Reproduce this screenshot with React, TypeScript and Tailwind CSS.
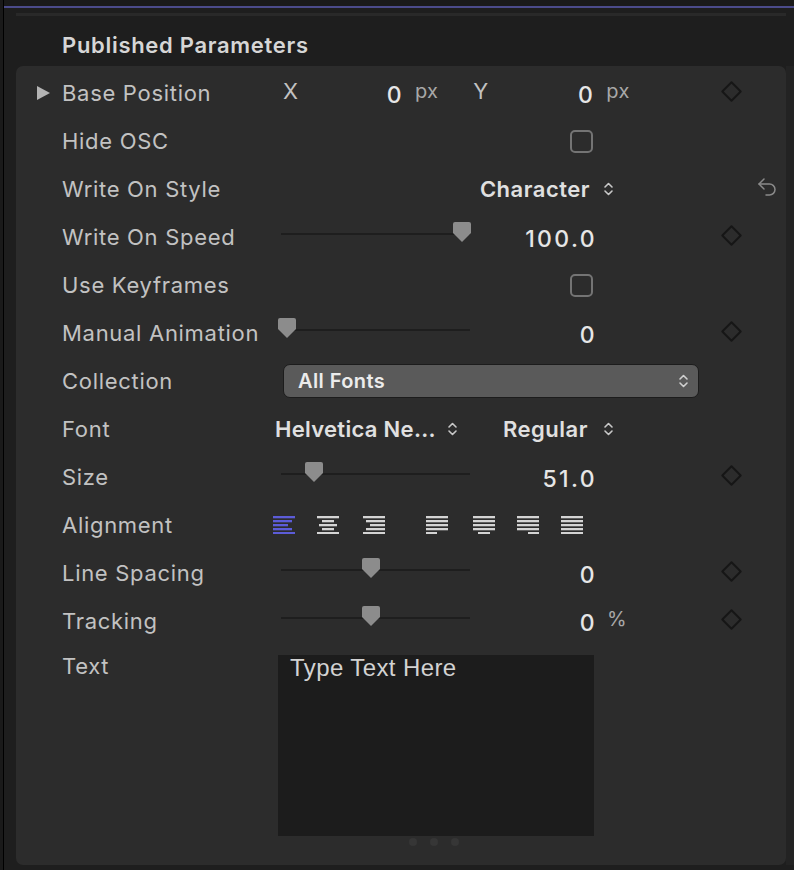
import React from 'react'
import { Undo2 } from 'lucide-react'

// Parameter inspector, dark theme

function Diamond() {
    return <div className="w-[15px] h-[15px] rotate-45 border-2 border-[#161616] rounded-[1px] -mt-1" />
}

function KeyCol({ show = true }: { show?: boolean }) {
    return <div className="w-[42px] flex justify-center">{show && <Diamond />}</div>
}

function Chevrons({ className = '' }: { className?: string }) {
    return (
        <svg width="11" height="16" viewBox="0 0 11 16" className={className}>
            <path d="M2 6 5.5 2.5 9 6M2 10l3.5 3.5L9 10" fill="none" stroke="currentColor" strokeWidth="1.6" strokeLinecap="round" strokeLinejoin="round" />
        </svg>
    )
}

function Thumb() {
    return (
        <svg width="20" height="21" viewBox="0 0 20 21">
            <path d="M3 0h14a2 2 0 0 1 2 2v9l-9 9-9-9V2a2 2 0 0 1 2-2z" fill="#8c8c8c" />
        </svg>
    )
}

function Slider({ pos }: { pos: number }) {
    return (
        <div className="relative w-[200px] h-[22px] -mt-2">
            <div className="absolute left-[6px] w-[189px] top-[11px] h-[2px] bg-[#1e1e1e]" />
            <div className="absolute top-0" style={{ left: pos - 10 }}>
                <Thumb />
            </div>
        </div>
    )
}

const num = 'text-right text-[23px] font-medium tracking-[2.4px] text-[#e6e6e6] mt-1 -mr-[2px]'
const unitCls = 'text-[20px] tracking-[0.3px] text-[#a8a8a8] -mt-1'

function Value({ children, unit }: { children: React.ReactNode; unit?: string }) {
    return (
        <div className="flex items-center">
            <div className={`w-[122px] ${num}`}>{children}</div>
            {unit && <span className={`ml-[12px] ${unitCls}`}>{unit}</span>}
        </div>
    )
}

function Check() {
    return (
        <div className="pl-[295px]">
            <div className="w-[23px] h-[23px] rounded-[5px] border-2 border-[#747474]" />
        </div>
    )
}

function Row({ label, arrow, children, keyframe, undo }: {
    label: string
    arrow?: boolean
    children?: React.ReactNode
    keyframe?: boolean
    undo?: boolean
}) {
    return (
        <div className="flex items-center h-12">
            <div className="w-[46px] flex pl-[21px]">
                {arrow && (
                    <svg width="13" height="14" viewBox="0 0 13 14">
                        <path d="M0 0 13 7 0 14z" fill="#b4b4b4" />
                    </svg>
                )}
            </div>
            <div className="w-[213px] text-[22px] tracking-[0.7px] text-[#c2c2c2] whitespace-nowrap">{label}</div>
            <div className="w-[435px] flex items-center">{children}</div>
            <KeyCol show={!!keyframe} />
            <div className="w-[34px] flex justify-center">
                {undo && <Undo2 size={24} strokeWidth={1.5} className="text-[#8a8a8a] -mt-1 -ml-[4px]" />}
            </div>
        </div>
    )
}

const lines: Record<string, [number, number][]> = {
    left: [[0, 22], [0, 19], [0, 15], [0, 19], [0, 22]],
    center: [[0, 22], [5, 12], [2, 18], [5, 12], [0, 22]],
    right: [[0, 22], [3, 19], [7, 15], [3, 19], [0, 22]],
    jleft: [[0, 22], [0, 22], [0, 22], [0, 22], [0, 11]],
    jcenter: [[0, 22], [0, 22], [0, 22], [0, 22], [5, 12]],
    jright: [[0, 22], [0, 22], [0, 22], [0, 22], [11, 11]],
    jfull: [[0, 22], [0, 22], [0, 22], [0, 22], [0, 22]],
}

function AlignIcon({ kind, active }: { kind: string; active?: boolean }) {
    return (
        <svg width="22" height="18" viewBox="0 0 22 18">
            {lines[kind].map(([x, w], i) => (
                <rect key={i} x={x} y={i * 4} width={w} height="2.3" fill={active ? '#5c5cd8' : '#d4d4d4'} />
            ))}
        </svg>
    )
}

const popup = 'text-[22px] font-semibold tracking-[0.5px] text-[#e0e0e0]'

export default function App() {
    return (
        <div className="w-[794px] h-[870px] bg-[#1e1e1e] flex overflow-hidden font-['Inter',sans-serif]">
            <div className="w-[3px] bg-[#1a1a1a]" />
            <div className="w-px bg-black" />
            <div className="flex-1 flex flex-col">
                <div className="h-[6px] bg-[#1a1a1a]" />
                <div className="h-[2px] bg-[#4b4b8a]" />
                <div className="h-[5px]" />
                <div className="ml-[12px] mr-[8px] h-[3px] bg-[#292929]" />
                <div className="h-[50px] pl-[58px] pt-[13px] text-[22px] font-semibold tracking-[0.7px] text-[#d6d6d6]">
                    Published Parameters
                </div>
                <div className="flex">
                    <div className="ml-[12px] w-[770px] h-[799px] bg-[#2c2c2c] rounded-[7px] pt-[3px]">
                        <Row label="Base Position" arrow keyframe>
                            <span className="ml-[8px] text-[22px] text-[#c2c2c2] -mt-1">X</span>
                            <div className={`w-[106px] ${num}`}>0</div>
                            <span className={`ml-[13px] ${unitCls}`}>px</span>
                            <span className="ml-[35px] text-[22px] text-[#c2c2c2] -mt-1">Y</span>
                            <div className={`w-[107px] ${num}`}>0</div>
                            <span className={`ml-[13px] ${unitCls}`}>px</span>
                        </Row>
                        <Row label="Hide OSC"><Check /></Row>
                        <Row label="Write On Style" undo>
                            <div className={`w-[339px] flex justify-end items-center gap-[13px] ${popup}`}>
                                <span>Character</span>
                                <Chevrons className="text-[#c8c8c8]" />
                            </div>
                        </Row>
                        <Row label="Write On Speed" keyframe>
                            <Slider pos={187} />
                            <Value>100.0</Value>
                        </Row>
                        <Row label="Use Keyframes"><Check /></Row>
                        <Row label="Manual Animation" keyframe>
                            <Slider pos={12} />
                            <Value>0</Value>
                        </Row>
                        <Row label="Collection">
                            <div className="ml-[8px] w-[416px] h-[34px] bg-[#5a5a5a] border border-[#1c1c1c] rounded-[7px] flex items-center justify-between pl-[14px] pr-[9px] text-[20px] font-semibold tracking-[0.4px] text-[#ececec]">
                                <span>All Fonts</span>
                                <Chevrons className="text-[#d0d0d0]" />
                            </div>
                        </Row>
                        <Row label="Font">
                            <div className={`w-[183px] flex justify-between items-center ${popup}`}>
                                <span className="whitespace-nowrap tracking-[0.3px]">Helvetica Ne...</span>
                                <Chevrons className="text-[#c8c8c8]" />
                            </div>
                            <div className={`ml-[45px] w-[111px] flex justify-between items-center ${popup}`}>
                                <span>Regular</span>
                                <Chevrons className="text-[#c8c8c8]" />
                            </div>
                        </Row>
                        <Row label="Size" keyframe>
                            <Slider pos={39} />
                            <Value>51.0</Value>
                        </Row>
                        <Row label="Alignment">
                            <div className="flex items-center -ml-[2px]">
                                <AlignIcon kind="left" active />
                                <div className="ml-[22px]"><AlignIcon kind="center" /></div>
                                <div className="ml-[24px]"><AlignIcon kind="right" /></div>
                                <div className="ml-[41px]"><AlignIcon kind="jleft" /></div>
                                <div className="ml-[25px]"><AlignIcon kind="jcenter" /></div>
                                <div className="ml-[22px]"><AlignIcon kind="jright" /></div>
                                <div className="ml-[22px]"><AlignIcon kind="jfull" /></div>
                            </div>
                        </Row>
                        <Row label="Line Spacing" keyframe>
                            <Slider pos={96} />
                            <Value>0</Value>
                        </Row>
                        <Row label="Tracking" keyframe>
                            <Slider pos={96} />
                            <Value unit="%">0</Value>
                        </Row>
                        <div className="flex">
                            <div className="w-[46px]" />
                            <div className="w-[213px] pt-[5px] text-[22px] tracking-[0.7px] text-[#c2c2c2]">Text</div>
                            <div className="flex flex-col items-center ml-[3px] mt-[10px]">
                                <div className="w-[316px] h-[181px] bg-[#1c1c1c] px-[12px] leading-[26px] text-[24px] tracking-[0.4px] text-[#d2d2d2] font-['Liberation_Sans',sans-serif]">
                                    Type Text Here
                                </div>
                                <div className="flex gap-[13px] mt-[2px] -ml-[4px]">
                                    <div className="w-[8px] h-[8px] rounded-full bg-[#363636]" />
                                    <div className="w-[8px] h-[8px] rounded-full bg-[#363636]" />
                                    <div className="w-[8px] h-[8px] rounded-full bg-[#363636]" />
                                </div>
                            </div>
                        </div>
                    </div>
                    <div className="w-[8px] bg-[#232323] h-[799px]" />
                </div>
            </div>
        </div>
    )
}
